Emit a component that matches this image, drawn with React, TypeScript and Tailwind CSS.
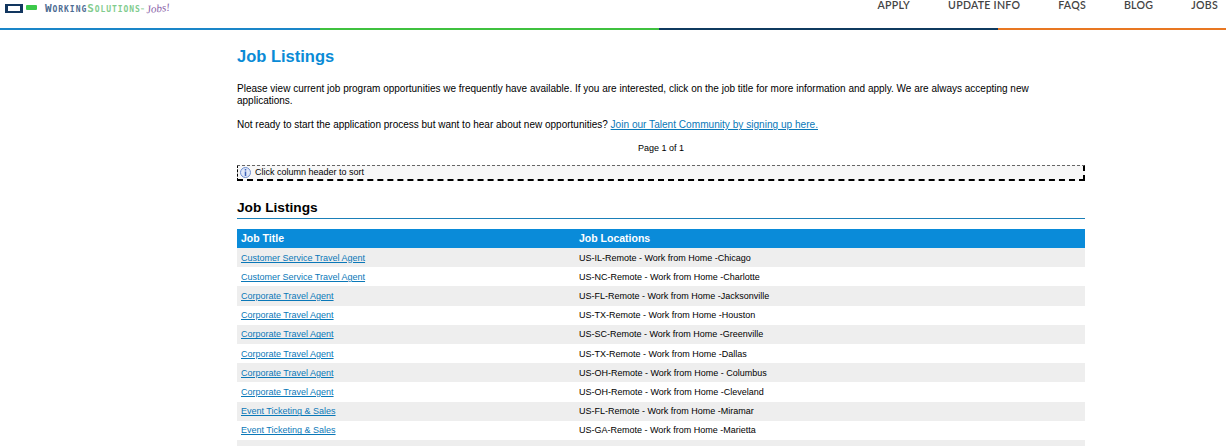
const jobs = [
  ['Customer Service Travel Agent', 'US-IL-Remote - Work from Home -Chicago'],
  ['Customer Service Travel Agent', 'US-NC-Remote - Work from Home -Charlotte'],
  ['Corporate Travel Agent', 'US-FL-Remote - Work from Home -Jacksonville'],
  ['Corporate Travel Agent', 'US-TX-Remote - Work from Home -Houston'],
  ['Corporate Travel Agent', 'US-SC-Remote - Work from Home -Greenville'],
  ['Corporate Travel Agent', 'US-TX-Remote - Work from Home -Dallas'],
  ['Corporate Travel Agent', 'US-OH-Remote - Work from Home - Columbus'],
  ['Corporate Travel Agent', 'US-OH-Remote - Work from Home -Cleveland'],
  ['Event Ticketing & Sales', 'US-FL-Remote - Work from Home -Miramar'],
  ['Event Ticketing & Sales', 'US-GA-Remote - Work from Home -Marietta'],
  ['', ''],
]

const navItems = ['APPLY', 'UPDATE INFO', 'FAQS', 'BLOG', 'JOBS']

export default function App() {
  return (
    <div className="h-[446px] overflow-hidden bg-white font-['Liberation_Sans',Arial,sans-serif] text-[9px] text-black">
      <header className="flex h-[28px] justify-between">
        <div className="flex h-[17px] items-center pl-[5px]">
          <svg width="33" height="10" viewBox="0 0 33 10" className="mt-[1px] shrink-0">
            <rect x="0" y="0" width="18" height="9" fill="#12365f" />
            <rect x="3" y="2" width="12" height="5" fill="#ffffff" />
            <rect x="21" y="1" width="11" height="5" rx="1" fill="#3cc94a" />
          </svg>
          <span className="mt-[1px] ml-[7px] flex items-baseline font-['DejaVu_Sans_Mono',monospace] text-[11px] font-bold tracking-[0.95px] [font-variant:small-caps]">
            <span className="text-[#4d6c92]">Working</span>
            <span className="text-[#82cc8e]">Solutions</span>
            <span className="text-[5px] tracking-normal text-[#82cc8e]">™</span>
          </span>
          <span className="ml-[2px] -rotate-6 font-['Liberation_Serif',serif] text-[11px] italic leading-[11px] text-[#8a62a8]">Jobs!</span>
        </div>
        <nav className="flex gap-[38px] pr-[8px] font-['Lato',sans-serif] text-[10.6px] font-semibold leading-[11px] tracking-[0.25px] text-[#444444]">
          {navItems.map((item) => (
            <a key={item}>{item}</a>
          ))}
        </nav>
      </header>

      <div className="flex h-[2px]">
        <div className="w-[320px] bg-[#1a86c8]" />
        <div className="w-[339px] bg-[#3fc13f]" />
        <div className="w-[339px] bg-[#0f3a5f]" />
        <div className="flex-1 bg-[#e87722]" />
      </div>

      <main className="ml-[237px] w-[848px]">
        <h1 className="mt-[16px] text-[16.5px] font-bold leading-[20px] text-[#0a8bd6]">Job Listings</h1>
        <p className="mt-[17px] text-[10px] leading-[12px]">
          Please view current job program opportunities we frequently have available. If you are interested, click on the job title for more information and apply. We are always accepting new applications.
        </p>
        <p className="mt-[12px] text-[10px] leading-[12px]">
          Not ready to start the application process but want to hear about new opportunities?{' '}
          <a className="text-[10.1px] text-[#0a78b8] underline">Join our Talent Community by signing up here.</a>
        </p>
        <p className="mt-[11px] text-center leading-[12px]">Page 1 of 1</p>
        <div className="mt-[11px] flex h-[16px] items-center gap-[4px] border-t border-r-2 border-b-2 border-l border-dashed border-t-[#666666] border-r-black border-b-black border-l-black bg-[#f7f7f7] pl-[2px]">
          <svg width="11" height="11" viewBox="0 0 11 11" className="shrink-0">
            <circle cx="5.5" cy="5.5" r="5" fill="#dfe7f8" stroke="#6f8fd0" />
            <rect x="4.75" y="2" width="1.5" height="1.5" fill="#3f63b8" />
            <rect x="4.75" y="4.5" width="1.5" height="4.5" fill="#3f63b8" />
          </svg>
          <span>Click column header to sort</span>
        </div>
        <h2 className="mt-[19px] border-b border-[#1a7fb8] pb-[2px] text-[13.7px] font-bold leading-[16px]">Job Listings</h2>
        <div className="mt-[10px] flex h-[19px] items-center bg-[#0a8bd9] pl-[4px] text-[10.5px] font-bold text-white">
          <span className="w-[338px]">Job Title</span>
          <span>Job Locations</span>
        </div>
        {jobs.map(([title, location], i) => (
          <div key={i} className={`flex h-[19.2px] items-center pt-[1.8px] pl-[4px] ${i % 2 === 0 ? 'bg-[#eeeeee]' : 'bg-white'}`}>
            <a className="w-[338px] text-[#0a78b8] underline">{title}</a>
            <span>{location}</span>
          </div>
        ))}
      </main>
    </div>
  )
}
